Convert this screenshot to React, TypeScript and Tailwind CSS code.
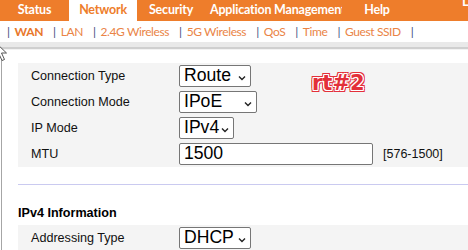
import React from "react";

function Chevron() {
  return (
    <svg width="8" height="6" viewBox="0 0 8 6" className="mt-[3px] shrink-0">
      <path d="M1 1.5 L4 4.5 L7 1.5" fill="none" stroke="#222" strokeWidth="1.4" />
    </svg>
  );
}

function Select({ value, className }: { value: string; className: string }) {
  return (
    <div
      className={
        "h-[22px] border border-[#767676] rounded-[2px] bg-white flex items-center justify-between pl-[4px] pr-[4px] text-[17.6px] leading-none text-black " +
        className
      }
    >
      <span>{value}</span>
      <Chevron />
    </div>
  );
}

function Row({ label, children }: { label: string; children: React.ReactNode }) {
  return (
    <div className="flex items-center h-[26px]">
      <div className="w-[161px] pl-[13px] text-[12.6px] text-[#111]">{label}</div>
      {children}
    </div>
  );
}

const subItems = ["WAN", "LAN", "2.4G Wireless", "5G Wireless", "QoS", "Time", "Guest SSID"];

export default function App() {
  return (
    <div className="relative w-[468px] h-[250px] overflow-hidden bg-white font-['Liberation_Sans',Arial,sans-serif]">
      {/* top nav */}
      <div className="flex h-[21px] bg-[#ee7d2b] text-white font-bold text-[12.5px] tracking-[-0.2px] font-['Lato',sans-serif] whitespace-nowrap">
        <div className="w-[69px] flex items-center justify-center">Status</div>
        <div className="w-[68px] flex items-center justify-center bg-white text-[#ee7d2b]">Network</div>
        <div className="w-[68px] flex items-center justify-center">Security</div>
        <div className="w-[137px] flex items-center pl-[5px] overflow-hidden">Application Management</div>
        <div className="w-[70px] flex items-center justify-center">Help</div>
      </div>
      <span className="absolute left-[462px] top-[-5px] text-white font-bold text-[13px] leading-none font-['Lato',sans-serif]">L</span>

      {/* sub nav */}
      <div className="flex items-center h-[21px] pl-[7px] text-[12px] tracking-[-0.4px] font-['Lato',sans-serif] whitespace-nowrap">
        {subItems.map((s, i) => (
          <React.Fragment key={s}>
            <span className="text-[#3f4b80] mr-[5px]">|</span>
            <span className={(i === 0 ? "font-bold text-[#e8772c] " : "text-[#ea8446] ") + "mr-[10px]"}>{s}</span>
          </React.Fragment>
        ))}
        <span className="text-[#3f4b80]">|</span>
      </div>

      {/* band */}
      <div className="h-[5px] bg-[#e9e9e9]" />
      <div className="h-[2px] bg-[#cfcfcf]" />
      <div className="h-[1px] bg-[#f2f2f2]" />

      {/* main */}
      <div className="flex h-[210px]">
        <div className="ml-[1px] w-[1px] bg-[#a6a6a6]" />
        <div className="flex-1 pl-[16px]">
          <div className="mt-[13px] bg-[#f4f4f4]">
            <Row label="Connection Type">
              <Select value="Route" className="w-[72px]" />
            </Row>
            <Row label="Connection Mode">
              <Select value="IPoE" className="w-[78px]" />
            </Row>
            <Row label="IP Mode">
              <Select value="IPv4" className="w-[55px]" />
            </Row>
            <Row label="MTU">
              <div className="h-[22px] w-[194px] border border-[#767676] rounded-[2px] bg-white flex items-center pl-[4px] text-[17.6px] leading-none text-black">
                1500
              </div>
              <span className="ml-[10px] text-[12.5px] text-[#111]">[576-1500]</span>
            </Row>
          </div>
          <div className="mt-[17px] h-[1px] bg-[#cacaf0]" />
          <div className="mt-[21px] h-[14px] leading-[14px] font-bold text-[12.6px] text-black">IPv4 Information</div>
          <div className="mt-[5px] bg-[#f4f4f4]">
            <Row label="Addressing Type">
              <Select value="DHCP" className="w-[72px]" />
            </Row>
          </div>
        </div>
      </div>

      {/* watermark */}
      <span className="absolute left-[312px] top-[73px] text-[21px] font-bold leading-none text-[#e3303a] font-['DejaVu_Sans',sans-serif] [text-shadow:1px_0_0_#fff,-1px_0_0_#fff,0_1px_0_#fff,0_-1px_0_#fff,1px_1px_0_#fff,-1px_-1px_0_#fff,1px_-1px_0_#fff,-1px_1px_0_#fff,2px_0_0_#e3303a,-2px_0_0_#e3303a,0_2px_0_#e3303a,0_-2px_0_#e3303a,2px_2px_0_#e3303a,-2px_-2px_0_#e3303a,2px_-2px_0_#e3303a,-2px_2px_0_#e3303a]">
        rt#2
      </span>

      {/* cursor */}
      <svg className="absolute left-[-5px] top-[42px]" width="14" height="20" viewBox="0 0 14 20">
        <path d="M0.5 0.5 L0.5 15.5 L4 12 L7 18.5 L9.5 17.5 L6.5 11 L11.5 11 Z" fill="#fff" stroke="#555" strokeWidth="1" />
      </svg>
    </div>
  );
}
